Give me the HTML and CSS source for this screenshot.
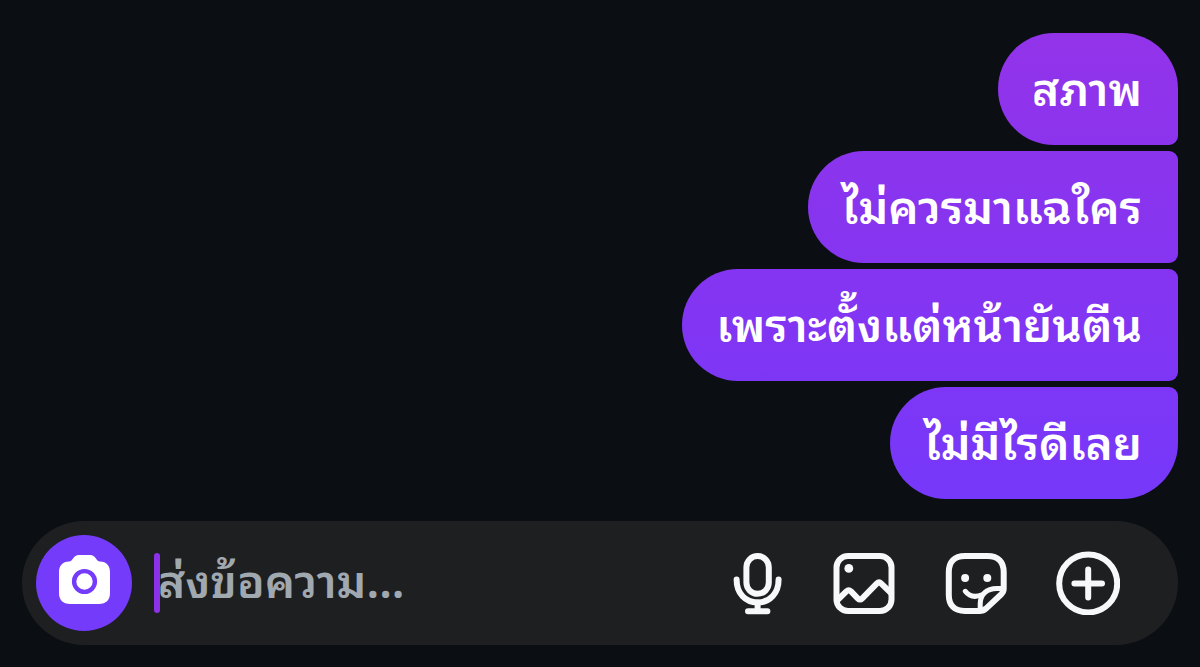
FILE: index.html
```html
<!DOCTYPE html>
<html lang="th">
<head>
  <meta charset="utf-8">
  <meta name="viewport" content="width=device-width, initial-scale=1">
  <title>แชท</title>
  <link rel="stylesheet" href="styles.css">
</head>
<body>
  <main class="chat">
    <div class="messages">
      <p class="bubble first">สภาพ</p>
      <p class="bubble">ไม่ควรมาแฉใคร</p>
      <p class="bubble">เพราะตั้งแต่หน้ายันตีน</p>
      <p class="bubble last">ไม่มีไรดีเลย</p>
    </div>

    <form class="composer">
      <button type="button" class="camera" aria-label="กล้อง">
        <svg viewBox="0 0 96 96" width="96" height="96">
          <path d="M33 26.5 C37 26.5 37 20 43 20 H54 C60 20 60 26.5 64 26.5 C70.5 26.5 74 31 74 37 V58 C74 65 70 69 63 69 H34 C27 69 23 65 23 58 V37 C23 31 26.5 26.5 33 26.5 Z" fill="#fff"/>
          <circle cx="48.5" cy="46.5" r="10.4" fill="#fff" stroke="#743bfb" stroke-width="4.4"/>
        </svg>
      </button>

      <label class="field">
        <span class="caret"></span>
        <input type="text" class="text" placeholder="ส่งข้อความ..." aria-label="ส่งข้อความ">
      </label>

      <div class="actions">
        <button type="button" class="action" aria-label="เสียง">
          <svg viewBox="0 0 52 64" width="52" height="64">
            <rect x="14.4" y="5" width="22.4" height="37.8" rx="11.2"/>
            <path d="M4.6 28.5 C4.6 42 13 51.5 25.6 51.5 S46.6 42 46.6 28.5"/>
            <path d="M25.6 51.5 V60 M16 60.2 H35.4"/>
          </svg>
        </button>
        <button type="button" class="action" aria-label="รูปภาพ">
          <svg viewBox="0 0 64 64" width="64" height="64">
            <rect x="4.5" y="5" width="55" height="55" rx="11.5"/>
            <circle class="dot" cx="16.8" cy="17.4" r="4.4"/>
            <path d="M5 49.5 L14.4 40.4 Q16.7 38.2 19 40.4 L25.7 47.3 Q28 49.6 30.3 47.3 L44.7 32.6 Q47 30.4 49.3 32.6 L59 42"/>
          </svg>
        </button>
        <button type="button" class="action" aria-label="สติกเกอร์">
          <svg viewBox="0 0 64 64" width="64" height="64">
            <path d="M35.5 60 H21 C10 60 4.8 54 4.8 44 V21 C4.8 11 10 5 21 5 H43.5 C54.5 5 59.7 11 59.7 21 V37.5 C59.7 40 59 41.5 57.3 43.2 L42 57.6 C40 59.4 38.5 60 35.5 60 Z"/>
            <path class="thin" d="M59 37.5 H53 C42 37.5 36.2 44 36.2 53 V59"/>
            <path class="thin" d="M21.3 40.3 C25 45.2 31 46.6 38 43.8"/>
            <circle class="dot" cx="21.1" cy="27" r="4"/>
            <circle class="dot" cx="43.3" cy="27" r="4"/>
          </svg>
        </button>
        <button type="button" class="action" aria-label="เพิ่ม">
          <svg viewBox="0 0 64 64" width="64" height="64">
            <circle cx="32.2" cy="32.4" r="29"/>
            <path d="M32.2 18.4 V46.4 M18.4 32.4 H46"/>
          </svg>
        </button>
      </div>
    </form>
  </main>
</body>
</html>
```

FILE: styles.css
```css
* {
  box-sizing: border-box;
}

body {
  margin: 0;
  background-color: #0b0f13;
  font-family: "Noto Sans Thai Looped", "Noto Looped Thai", "Loma", "Garuda", "Noto Sans Thai", "Noto Sans", sans-serif;
}

.chat {
  display: flex;
  flex-direction: column;
  justify-content: flex-end;
  gap: 22px;
  min-height: 100vh;
  padding: 33px 22px 23px;
}

.messages {
  display: flex;
  flex-direction: column;
  align-items: flex-end;
  gap: 6px;
}

/* the gradient runs down the window, each bubble shows its own part */
.bubble {
  margin: 0;
  padding: 22px 36px 30px 34px;
  border-radius: 56px 9px 9px 56px;
  background: linear-gradient(#9433e8, #8335f2 45%, #7638fa 75%) fixed;
  color: #fff;
  font-size: 46px;
  font-weight: 600;
  line-height: 60px;
}

.first {
  border-top-right-radius: 56px;
}

.last {
  border-bottom-right-radius: 56px;
}

.composer {
  display: flex;
  align-items: center;
  padding: 14px 58px 14px 14px;
  border-radius: 62px;
  background-color: #1e1f21;
}

button {
  display: block;
  padding: 0;
  border: 0;
  background: none;
  cursor: pointer;
}

svg {
  display: block;
}

.camera {
  flex: none;
  border-radius: 50%;
  background-color: #743bfb;
}

.field {
  display: flex;
  flex: 1;
  align-items: center;
  min-width: 0;
  padding-left: 22px;
}

.caret {
  flex: none;
  width: 6px;
  height: 60px;
  margin-right: -2px;
  border-radius: 3px;
  background-color: #8b32e8;
}

.text {
  flex: 1;
  min-width: 0;
  height: 90px;
  padding: 0 0 12px;
  border: 0;
  outline: 0;
  background: none;
  color: #fff;
  font-family: inherit;
  font-size: 46px;
  font-weight: 600;
}

.text::placeholder {
  color: #a0a8b0;
  opacity: 1;
}

.actions {
  display: flex;
  gap: 48px;
}

.action svg {
  fill: none;
  stroke: #f7f8f9;
  stroke-width: 6;
  stroke-linecap: round;
  stroke-linejoin: round;
}

.action .thin {
  stroke-width: 5;
}

.action .dot {
  fill: #f7f8f9;
  stroke: none;
}
```
